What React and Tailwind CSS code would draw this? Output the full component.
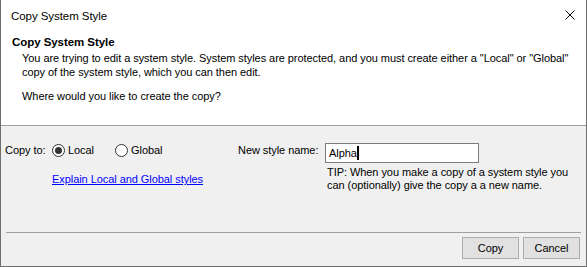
import React, { useState } from 'react';

const Radio = ({ checked, label, onClick }) => (
  <button type="button" onClick={onClick} className="flex items-center gap-[3px] h-4">
    <span className="w-[13px] h-[13px] rounded-full border border-[#333] bg-white flex items-center justify-center">
      {checked && <span className="w-[7px] h-[7px] rounded-full bg-[#333]" />}
    </span>
    <span>{label}</span>
  </button>
);

const App = () => {
  const [target, setTarget] = useState('local');
  const [name] = useState('Alpha');

  return (
    <div
      className="w-[587px] h-[267px] flex flex-col border-x border-b border-[#6f6f6f] bg-[#f0f0f0] text-[11px] leading-4 text-black whitespace-nowrap tracking-[-0.06px]"
      style={{ fontFamily: '"Liberation Sans", Arial, sans-serif' }}
    >
      {/* Title bar */}
      <div className="h-[31px] bg-white flex items-center justify-between pl-[10px] pr-[11px]">
        <span className="text-[11.5px]">Copy System Style</span>
        <svg width="10" height="10" viewBox="0 0 10 10" className="mt-[-1px]">
          <path d="M0.5 0.5 L9.5 9.5 M9.5 0.5 L0.5 9.5" stroke="#000" strokeWidth="1" />
        </svg>
      </div>

      {/* Header */}
      <div className="h-[95px] bg-white border-b border-[#a0a0a0] pt-[4px]">
        <div className="pl-[11px] font-bold text-[11.5px] leading-[15px]">Copy System Style</div>
        <div className="pl-[21px] mt-[1px] leading-[14px]">
          <p>You are trying to edit a system style. System styles are protected, and you must create either a "Local" or "Global"</p>
          <p>copy of the system style, which you can then edit.</p>
          <p className="mt-[10px]">Where would you like to create the copy?</p>
        </div>
      </div>

      {/* Options */}
      <div className="flex-1 flex pt-[16px] pl-[4px]">
        <div className="w-[233px]">
          <div className="flex items-center">
            <span className="w-[47px]">Copy to:</span>
            <div className="w-[63px]">
              <Radio checked={target === 'local'} label="Local" onClick={() => setTarget('local')} />
            </div>
            <Radio checked={target === 'global'} label="Global" onClick={() => setTarget('global')} />
          </div>
          <a href="#" className="block mt-[13px] ml-[47px] text-[#0000ff] underline">
            Explain Local and Global styles
          </a>
        </div>
        <div>
          <div className="flex items-start">
            <span className="w-[87px]">New style name:</span>
            <div className="mt-[1px] w-[154px] h-[20px] bg-white border border-[#7a7a7a] flex items-center pl-[3px]">
              <span>{name}</span>
              <span className="w-[2px] h-[14px] bg-black" />
            </div>
          </div>
          <div className="ml-[89px] mt-[3px] leading-[13px]">
            <p>TIP: When you make a copy of a system style you</p>
            <p>can (optionally) give the copy a a new name.</p>
          </div>
        </div>
      </div>

      {/* Footer */}
      <div className="mx-[5px] border-t border-[#a0a0a0] pt-[4px] pb-[7px] flex justify-end gap-[4px] pr-[1px]">
        <button className="w-[57px] h-[22px] bg-[#e1e1e1] border border-[#adadad]">Copy</button>
        <button className="w-[57px] h-[22px] bg-[#e1e1e1] border border-[#adadad]">Cancel</button>
      </div>
    </div>
  );
};

export default App;
